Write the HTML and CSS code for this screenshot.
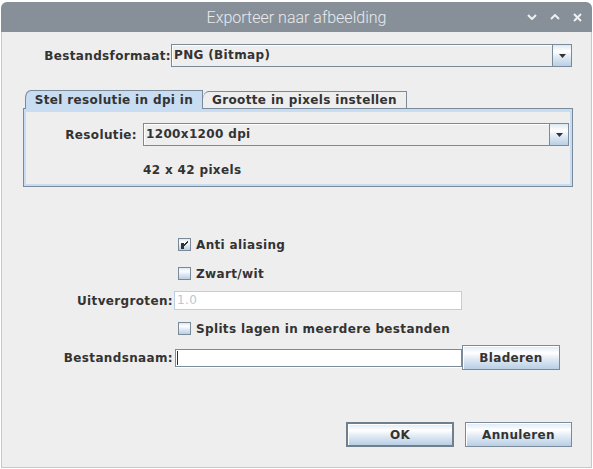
FILE: index.html
```html
<!DOCTYPE html>
<html lang="nl">
<head>
<meta charset="utf-8">
<title>Exporteer naar afbeelding</title>
<link rel="stylesheet" href="styles.css">
</head>
<body>
<div class="window">
  <div class="titlebar">
    <span class="title">Exporteer naar afbeelding</span>
    <div class="controls">
      <span class="ctl"><svg width="10" height="6" viewBox="0 0 10 6"><path d="M1 1 L5 5 L9 1"/></svg></span>
      <span class="ctl"><svg width="10" height="6" viewBox="0 0 10 6"><path d="M1 5 L5 1 L9 5"/></svg></span>
      <span class="ctl"><svg width="9" height="9" viewBox="0 0 9 9"><path d="M1 1 L8 8 M8 1 L1 8"/></svg></span>
    </div>
  </div>
  <div class="content">
    <div class="row format-row">
      <span class="lbl lbl-format">Bestandsformaat:</span>
      <div class="combo combo-format">
        <span class="combo-text">PNG (Bitmap)</span>
        <span class="combo-arrow"><svg width="7" height="4" viewBox="0 0 7 4"><path d="M0 0 H7 L3.5 4 Z"/></svg></span>
      </div>
    </div>

    <div class="tabs">
      <div class="tab tab-sel">Stel resolutie in dpi in</div>
      <div class="tab tab-other">Grootte in pixels instellen</div>
    </div>
    <div class="panel">
      <div class="panel-inner">
        <div class="row res-row">
          <span class="lbl lbl-res">Resolutie:</span>
          <div class="combo combo-res">
            <span class="combo-text">1200x1200 dpi</span>
            <span class="combo-arrow"><svg width="7" height="4" viewBox="0 0 7 4"><path d="M0 0 H7 L3.5 4 Z"/></svg></span>
          </div>
        </div>
        <div class="pixels">42 x 42 pixels</div>
      </div>
    </div>

    <div class="row check-row check-first">
      <span class="cb"><svg width="11" height="11" viewBox="0 0 11 11"><rect x="2" y="4" width="2" height="5"/><path d="M8.5 2.5 L4.5 6.5 M8.5 3.5 L4.5 7.5"/></svg></span>
      <span>Anti aliasing</span>
    </div>
    <div class="row check-row check-second">
      <span class="cb"></span>
      <span>Zwart/wit</span>
    </div>
    <div class="row field-row scale-row">
      <span class="lbl lbl-wide">Uitvergroten:</span>
      <div class="field field-disabled">1.0</div>
    </div>
    <div class="row check-row check-third">
      <span class="cb"></span>
      <span>Splits lagen in meerdere bestanden</span>
    </div>
    <div class="row file-row">
      <span class="lbl lbl-wide">Bestandsnaam:</span>
      <div class="field field-file"><span class="caret"></span></div>
      <button class="btn btn-browse">Bladeren</button>
    </div>

    <div class="row actions">
      <button class="btn btn-ok">OK</button>
      <button class="btn btn-cancel">Annuleren</button>
    </div>
  </div>
</div>
</body>
</html>
```

FILE: styles.css
```css
* { box-sizing: border-box; }

html, body {
  margin: 0;
  padding: 0;
  background: #ffffff;
}

body {
  width: 593px;
  height: 469px;
  overflow: hidden;
  font-family: "DejaVu Sans", "Liberation Sans", sans-serif;
  font-size: 12px;
  font-weight: bold;
  letter-spacing: 0.35px;
  color: #333333;
}

.window {
  margin: 2px 0 0 1px;
  width: 591px;
}

.titlebar {
  height: 30px;
  background: #879099;
  border-radius: 6px 6px 0 0;
  display: grid;
  grid-template-columns: 1fr auto 1fr;
  align-items: center;
}

.title {
  grid-column: 2;
  font-family: Roboto, "Noto Sans", sans-serif;
  font-weight: 300;
  font-size: 16px;
  letter-spacing: 0;
  color: #e8ebee;
  white-space: nowrap;
}

.controls {
  grid-column: 3;
  justify-self: end;
  display: flex;
  height: 30px;
  padding-right: 3px;
}

.ctl {
  width: 23px;
  height: 30px;
  display: flex;
  align-items: center;
  justify-content: center;
}

.ctl svg {
  fill: none;
  stroke: #eef0f2;
  stroke-width: 2;
}

.content {
  height: 436px;
  background: #eeeeee;
  border: 1px solid #c8c8c8;
  border-top: none;
  display: flex;
  flex-direction: column;
}

.row {
  display: flex;
  align-items: center;
  white-space: nowrap;
}

.lbl {
  text-align: right;
  line-height: 16px;
}

/* format row */
.format-row {
  margin-top: 12px;
  height: 23px;
}

.lbl-format { width: 169px; }

.combo {
  display: flex;
  height: 23px;
  border: 1px solid #7a8a99;
  background: #eeeeee;
}

.combo-format {
  margin-left: 0;
  width: 401px;
}

.combo-text {
  flex: 1;
  padding-left: 2px;
  line-height: 21px;
  box-shadow: inset 1px 1px 0 #ffffff;
}

.combo-arrow {
  width: 19px;
  border-left: 1px solid #7a8a99;
  background: linear-gradient(#dde8f3 0%, #ffffff 30%, #dde8f3 60%, #b8cfe5 100%);
  display: flex;
  align-items: center;
  justify-content: center;
}

.combo-arrow svg { fill: #333333; }

/* tabs */
.tabs {
  display: flex;
  align-items: flex-end;
  margin: 23px 0 0 23px;
  height: 18px;
  position: relative;
  z-index: 1;
}

.tab {
  border: 1px solid #7a8a99;
  border-bottom: none;
  border-top-left-radius: 6px 8px;
  text-align: center;
  line-height: 16px;
}

.tab-sel {
  width: 178px;
  height: 19px;
  margin-bottom: -1px;
  background: #c8ddf2;
  padding-top: 1px;
}

.tab-other {
  width: 204px;
  height: 17px;
  background: #eeeeee;
  border-left: none;
}

.panel {
  margin-left: 21px;
  width: 550px;
  height: 79px;
  border: 1px solid #7a8a99;
  padding: 3px 2px 2px 2px;
  background: #c8ddf2;
}

.panel-inner {
  height: 100%;
  background: #eeeeee;
  padding-top: 11px;
}

.res-row { height: 23px; }

.lbl-res { width: 111px; }

.combo-res {
  flex: 1;
  margin-left: 6px;
  margin-right: 1px;
}

.pixels {
  margin-top: 16px;
  padding-left: 117px;
  line-height: 16px;
}

/* checkboxes */
.check-row {
  height: 13px;
  padding-left: 176px;
  line-height: 16px;
}

.check-first { margin-top: 51px; }
.check-second { margin-top: 16px; }
.check-third { margin-top: 12px; }

.cb {
  width: 13px;
  height: 13px;
  border: 1px solid #7a8a99;
  background: linear-gradient(#dde8f3 0%, #ffffff 30%, #dde8f3 60%, #b8cfe5 100%);
  margin-right: 5px;
  flex: none;
  display: block;
}

.cb svg {
  display: block;
  fill: #333333;
  stroke: #333333;
  stroke-width: 1;
  shape-rendering: crispEdges;
}

/* fields */
.lbl-wide { width: 171px; }

.scale-row {
  margin-top: 11px;
  height: 19px;
}

.field {
  background: #ffffff;
  border: 1px solid #7a8a99;
}

.field-disabled {
  margin-left: 1px;
  width: 288px;
  height: 19px;
  border-color: #b8cfe5;
  color: #b8c8d8;
  font-weight: normal;
  line-height: 17px;
  padding-left: 2px;
}

.file-row {
  margin-top: 10px;
  height: 25px;
}

.field-file {
  margin-left: 2px;
  width: 287px;
  height: 18px;
  padding: 1px 0 0 1px;
  box-shadow: 1px 1px 0 #ffffff;
}

.caret {
  display: block;
  width: 1px;
  height: 14px;
  background: #333333;
}

.btn {
  height: 25px;
  border: 1px solid #7a8a99;
  background: linear-gradient(#dde8f3 0%, #ffffff 30%, #dde8f3 60%, #b8cfe5 100%);
  box-shadow: inset 1px 1px 0 #ffffff;
  font-family: inherit;
  font-size: 12px;
  font-weight: bold;
  letter-spacing: 0.35px;
  color: #333333;
  padding: 0;
  margin: 0;
  display: flex;
  align-items: center;
  justify-content: center;
}

.btn-browse {
  width: 98px;
  margin-left: 0;
}

.actions {
  margin-top: 52px;
  height: 25px;
  padding-left: 344px;
}

.btn-ok {
  width: 108px;
  border: 2px solid #6f7f8e;
}

.btn-cancel {
  width: 107px;
  margin-left: 11px;
}
```
